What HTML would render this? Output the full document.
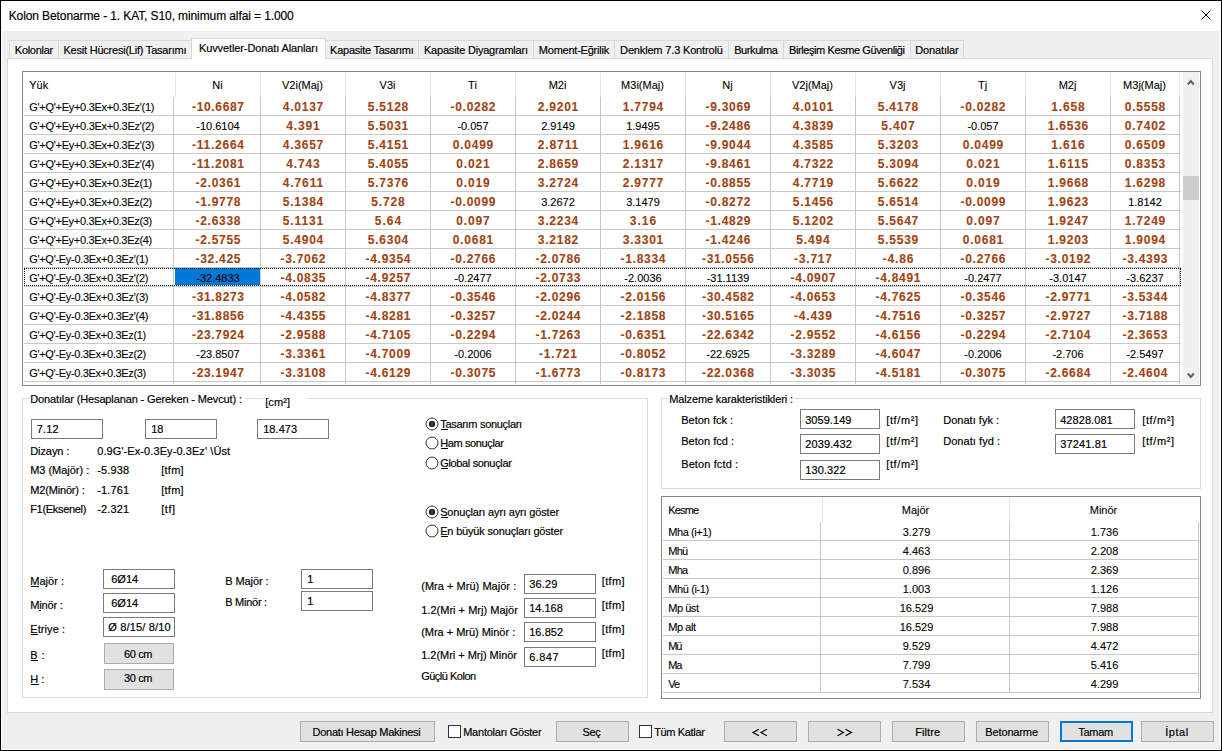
<!DOCTYPE html>
<html><head><meta charset="utf-8"><style>
html,body{margin:0;padding:0;width:1222px;height:751px;overflow:hidden;background:#000}
.t,.a{position:absolute;white-space:nowrap;line-height:14px;font-family:"Liberation Sans",sans-serif;color:#000}
.t{-webkit-text-stroke:0.18px currentColor}
.a{-webkit-text-stroke:0.1px currentColor}
</style></head><body>
<div style="position:absolute;left:0px;top:0px;width:1222px;height:751px;background:#000"></div>
<div style="position:absolute;left:1px;top:1px;width:1220px;height:749px;background:#fff"></div>
<div style="position:absolute;left:2px;top:31px;width:1218px;height:718px;background:#f0f0f0"></div>
<div class="t" style="left:8.70px;top:9px;font-size:12px;letter-spacing:-0.101px;">Kolon Betonarme - 1. KAT, S10, minimum alfai = 1.000</div>
<svg style="position:absolute;left:1200px;top:9px" width="13" height="13"><path d="M1.5 1.5L10.5 10.5M10.5 1.5L1.5 10.5" stroke="#000" stroke-width="1"/></svg>
<div style="position:absolute;left:7px;top:58px;width:1206px;height:655px;background:#fff;box-sizing:border-box;border:1px solid #d9d9d9"></div>
<div style="position:absolute;left:9px;top:40px;width:50px;height:19px;background:#f0f0f0;box-sizing:border-box;border:1px solid #d9d9d9"></div>
<div style="position:absolute;left:58px;top:40px;width:134px;height:19px;background:#f0f0f0;box-sizing:border-box;border:1px solid #d9d9d9"></div>
<div style="position:absolute;left:325px;top:40px;width:94px;height:19px;background:#f0f0f0;box-sizing:border-box;border:1px solid #d9d9d9"></div>
<div style="position:absolute;left:418px;top:40px;width:116px;height:19px;background:#f0f0f0;box-sizing:border-box;border:1px solid #d9d9d9"></div>
<div style="position:absolute;left:533px;top:40px;width:82px;height:19px;background:#f0f0f0;box-sizing:border-box;border:1px solid #d9d9d9"></div>
<div style="position:absolute;left:614px;top:40px;width:115px;height:19px;background:#f0f0f0;box-sizing:border-box;border:1px solid #d9d9d9"></div>
<div style="position:absolute;left:728px;top:40px;width:56px;height:19px;background:#f0f0f0;box-sizing:border-box;border:1px solid #d9d9d9"></div>
<div style="position:absolute;left:783px;top:40px;width:128px;height:19px;background:#f0f0f0;box-sizing:border-box;border:1px solid #d9d9d9"></div>
<div style="position:absolute;left:910px;top:40px;width:54px;height:19px;background:#f0f0f0;box-sizing:border-box;border:1px solid #d9d9d9"></div>
<div class="t" style="left:14.85px;top:43px;font-size:11px;letter-spacing:-0.296px;">Kolonlar</div>
<div class="t" style="left:63.50px;top:43px;font-size:11px;letter-spacing:-0.223px;">Kesit Hücresi(Lif) Tasarımı</div>
<div style="position:absolute;left:191px;top:38px;width:135px;height:21px;background:#fff;box-sizing:border-box;border:1px solid #d9d9d9;border-bottom:none"></div>
<div class="t" style="left:199.00px;top:41px;font-size:11px;letter-spacing:-0.114px;">Kuvvetler-Donatı Alanları</div>
<div class="t" style="left:330.10px;top:43px;font-size:11px;letter-spacing:-0.256px;">Kapasite Tasarımı</div>
<div class="t" style="left:424.00px;top:43px;font-size:11px;letter-spacing:-0.212px;">Kapasite Diyagramları</div>
<div class="t" style="left:538.85px;top:43px;font-size:11px;letter-spacing:-0.234px;">Moment-Eğrilik</div>
<div class="t" style="left:620.10px;top:43px;font-size:11px;letter-spacing:-0.160px;">Denklem 7.3 Kontrolü</div>
<div class="t" style="left:734.20px;top:43px;font-size:11px;letter-spacing:-0.410px;">Burkulma</div>
<div class="t" style="left:789.00px;top:43px;font-size:11px;letter-spacing:-0.406px;">Birleşim Kesme Güvenliği</div>
<div class="t" style="left:915.20px;top:43px;font-size:11px;letter-spacing:-0.132px;">Donatılar</div>
<div style="position:absolute;left:22px;top:71px;width:1179px;height:315px;background:#fff;box-sizing:border-box;border:1px solid #828790"></div>
<div style="position:absolute;left:175px;top:73px;width:1px;height:24px;background:#e5e5e5"></div>
<div style="position:absolute;left:260px;top:73px;width:1px;height:24px;background:#e5e5e5"></div>
<div style="position:absolute;left:345px;top:73px;width:1px;height:24px;background:#e5e5e5"></div>
<div style="position:absolute;left:430px;top:73px;width:1px;height:24px;background:#e5e5e5"></div>
<div style="position:absolute;left:515px;top:73px;width:1px;height:24px;background:#e5e5e5"></div>
<div style="position:absolute;left:600px;top:73px;width:1px;height:24px;background:#e5e5e5"></div>
<div style="position:absolute;left:685px;top:73px;width:1px;height:24px;background:#e5e5e5"></div>
<div style="position:absolute;left:770px;top:73px;width:1px;height:24px;background:#e5e5e5"></div>
<div style="position:absolute;left:855px;top:73px;width:1px;height:24px;background:#e5e5e5"></div>
<div style="position:absolute;left:940px;top:73px;width:1px;height:24px;background:#e5e5e5"></div>
<div style="position:absolute;left:1025px;top:73px;width:1px;height:24px;background:#e5e5e5"></div>
<div style="position:absolute;left:1110px;top:73px;width:1px;height:24px;background:#e5e5e5"></div>
<div style="position:absolute;left:1179px;top:73px;width:1px;height:24px;background:#e5e5e5"></div>
<div style="position:absolute;left:173px;top:97px;width:1px;height:287px;background:#c8c8c8"></div>
<div style="position:absolute;left:260px;top:97px;width:1px;height:287px;background:#c8c8c8"></div>
<div style="position:absolute;left:345px;top:97px;width:1px;height:287px;background:#c8c8c8"></div>
<div style="position:absolute;left:430px;top:97px;width:1px;height:287px;background:#c8c8c8"></div>
<div style="position:absolute;left:515px;top:97px;width:1px;height:287px;background:#c8c8c8"></div>
<div style="position:absolute;left:600px;top:97px;width:1px;height:287px;background:#c8c8c8"></div>
<div style="position:absolute;left:685px;top:97px;width:1px;height:287px;background:#c8c8c8"></div>
<div style="position:absolute;left:770px;top:97px;width:1px;height:287px;background:#c8c8c8"></div>
<div style="position:absolute;left:855px;top:97px;width:1px;height:287px;background:#c8c8c8"></div>
<div style="position:absolute;left:940px;top:97px;width:1px;height:287px;background:#c8c8c8"></div>
<div style="position:absolute;left:1025px;top:97px;width:1px;height:287px;background:#c8c8c8"></div>
<div style="position:absolute;left:1110px;top:97px;width:1px;height:287px;background:#c8c8c8"></div>
<div style="position:absolute;left:1179px;top:97px;width:1px;height:287px;background:#c8c8c8"></div>
<div style="position:absolute;left:24px;top:115px;width:1157px;height:1px;background:#c8c8c8"></div>
<div style="position:absolute;left:24px;top:134px;width:1157px;height:1px;background:#c8c8c8"></div>
<div style="position:absolute;left:24px;top:153px;width:1157px;height:1px;background:#c8c8c8"></div>
<div style="position:absolute;left:24px;top:172px;width:1157px;height:1px;background:#c8c8c8"></div>
<div style="position:absolute;left:24px;top:191px;width:1157px;height:1px;background:#c8c8c8"></div>
<div style="position:absolute;left:24px;top:210px;width:1157px;height:1px;background:#c8c8c8"></div>
<div style="position:absolute;left:24px;top:229px;width:1157px;height:1px;background:#c8c8c8"></div>
<div style="position:absolute;left:24px;top:248px;width:1157px;height:1px;background:#c8c8c8"></div>
<div style="position:absolute;left:24px;top:267px;width:1157px;height:1px;background:#c8c8c8"></div>
<div style="position:absolute;left:24px;top:286px;width:1157px;height:1px;background:#c8c8c8"></div>
<div style="position:absolute;left:24px;top:305px;width:1157px;height:1px;background:#c8c8c8"></div>
<div style="position:absolute;left:24px;top:324px;width:1157px;height:1px;background:#c8c8c8"></div>
<div style="position:absolute;left:24px;top:343px;width:1157px;height:1px;background:#c8c8c8"></div>
<div style="position:absolute;left:24px;top:362px;width:1157px;height:1px;background:#c8c8c8"></div>
<div style="position:absolute;left:24px;top:381px;width:1157px;height:1px;background:#c8c8c8"></div>
<div class="a" style="left:29.20px;top:78px;font-size:11px;">Yük</div>
<div class="a" style="left:212.31px;top:78px;font-size:11px;">Ni</div>
<div class="a" style="left:282.03px;top:78px;font-size:11px;">V2i(Maj)</div>
<div class="a" style="left:379.55px;top:78px;font-size:11px;">V3i</div>
<div class="a" style="left:468.12px;top:78px;font-size:11px;">Ti</div>
<div class="a" style="left:548.64px;top:78px;font-size:11px;">M2i</div>
<div class="a" style="left:621.12px;top:78px;font-size:11px;">M3i(Maj)</div>
<div class="a" style="left:722.31px;top:78px;font-size:11px;">Nj</div>
<div class="a" style="left:792.03px;top:78px;font-size:11px;">V2j(Maj)</div>
<div class="a" style="left:889.55px;top:78px;font-size:11px;">V3j</div>
<div class="a" style="left:977.92px;top:78px;font-size:11px;">Tj</div>
<div class="a" style="left:1058.64px;top:78px;font-size:11px;">M2j</div>
<div class="a" style="left:1123.12px;top:78px;font-size:11px;">M3j(Maj)</div>
<div style="position:absolute;left:175px;top:268px;width:85px;height:17px;background:#0078d7"></div>
<div class="a" style="left:29.20px;top:100px;font-size:11px;letter-spacing:-0.278px;">G'+Q'+Ey+0.3Ex+0.3Ez'(1)</div>
<div class="a" style="left:192.00px;top:100px;font-size:12px;font-weight:bold;color:#a04412;letter-spacing:0.663px;">-10.6687</div>
<div class="a" style="left:282.75px;top:100px;font-size:12px;font-weight:bold;color:#a04412;letter-spacing:0.762px;">4.0137</div>
<div class="a" style="left:367.75px;top:100px;font-size:12px;font-weight:bold;color:#a04412;letter-spacing:0.762px;">5.5128</div>
<div class="a" style="left:450.50px;top:100px;font-size:12px;font-weight:bold;color:#a04412;letter-spacing:0.719px;">-0.0282</div>
<div class="a" style="left:537.75px;top:100px;font-size:12px;font-weight:bold;color:#a04412;letter-spacing:0.762px;">2.9201</div>
<div class="a" style="left:622.75px;top:100px;font-size:12px;font-weight:bold;color:#a04412;letter-spacing:0.762px;">1.7794</div>
<div class="a" style="left:705.50px;top:100px;font-size:12px;font-weight:bold;color:#a04412;letter-spacing:0.719px;">-9.3069</div>
<div class="a" style="left:792.75px;top:100px;font-size:12px;font-weight:bold;color:#a04412;letter-spacing:0.762px;">4.0101</div>
<div class="a" style="left:877.75px;top:100px;font-size:12px;font-weight:bold;color:#a04412;letter-spacing:0.762px;">5.4178</div>
<div class="a" style="left:960.50px;top:100px;font-size:12px;font-weight:bold;color:#a04412;letter-spacing:0.719px;">-0.0282</div>
<div class="a" style="left:1051.25px;top:100px;font-size:12px;font-weight:bold;color:#a04412;letter-spacing:0.871px;">1.658</div>
<div class="a" style="left:1124.75px;top:100px;font-size:12px;font-weight:bold;color:#a04412;letter-spacing:0.762px;">0.5558</div>
<div class="a" style="left:29.20px;top:119px;font-size:11px;letter-spacing:-0.278px;">G'+Q'+Ey+0.3Ex+0.3Ez'(2)</div>
<div class="a" style="left:196.27px;top:119px;font-size:11px;">-10.6104</div>
<div class="a" style="left:286.25px;top:119px;font-size:12px;font-weight:bold;color:#a04412;letter-spacing:0.871px;">4.391</div>
<div class="a" style="left:367.75px;top:119px;font-size:12px;font-weight:bold;color:#a04412;letter-spacing:0.762px;">5.5031</div>
<div class="a" style="left:457.39px;top:119px;font-size:11px;">-0.057</div>
<div class="a" style="left:541.16px;top:119px;font-size:11px;">2.9149</div>
<div class="a" style="left:626.16px;top:119px;font-size:11px;">1.9495</div>
<div class="a" style="left:705.50px;top:119px;font-size:12px;font-weight:bold;color:#a04412;letter-spacing:0.719px;">-9.2486</div>
<div class="a" style="left:792.75px;top:119px;font-size:12px;font-weight:bold;color:#a04412;letter-spacing:0.762px;">4.3839</div>
<div class="a" style="left:881.25px;top:119px;font-size:12px;font-weight:bold;color:#a04412;letter-spacing:0.871px;">5.407</div>
<div class="a" style="left:967.39px;top:119px;font-size:11px;">-0.057</div>
<div class="a" style="left:1047.75px;top:119px;font-size:12px;font-weight:bold;color:#a04412;letter-spacing:0.762px;">1.6536</div>
<div class="a" style="left:1124.75px;top:119px;font-size:12px;font-weight:bold;color:#a04412;letter-spacing:0.762px;">0.7402</div>
<div class="a" style="left:29.20px;top:138px;font-size:11px;letter-spacing:-0.278px;">G'+Q'+Ey+0.3Ex+0.3Ez'(3)</div>
<div class="a" style="left:192.00px;top:138px;font-size:12px;font-weight:bold;color:#a04412;letter-spacing:0.757px;">-11.2664</div>
<div class="a" style="left:282.75px;top:138px;font-size:12px;font-weight:bold;color:#a04412;letter-spacing:0.762px;">4.3657</div>
<div class="a" style="left:367.75px;top:138px;font-size:12px;font-weight:bold;color:#a04412;letter-spacing:0.762px;">5.4151</div>
<div class="a" style="left:452.75px;top:138px;font-size:12px;font-weight:bold;color:#a04412;letter-spacing:0.762px;">0.0499</div>
<div class="a" style="left:537.75px;top:138px;font-size:12px;font-weight:bold;color:#a04412;letter-spacing:0.894px;">2.8711</div>
<div class="a" style="left:622.75px;top:138px;font-size:12px;font-weight:bold;color:#a04412;letter-spacing:0.762px;">1.9616</div>
<div class="a" style="left:705.50px;top:138px;font-size:12px;font-weight:bold;color:#a04412;letter-spacing:0.719px;">-9.9044</div>
<div class="a" style="left:792.75px;top:138px;font-size:12px;font-weight:bold;color:#a04412;letter-spacing:0.762px;">4.3585</div>
<div class="a" style="left:877.75px;top:138px;font-size:12px;font-weight:bold;color:#a04412;letter-spacing:0.762px;">5.3203</div>
<div class="a" style="left:962.75px;top:138px;font-size:12px;font-weight:bold;color:#a04412;letter-spacing:0.762px;">0.0499</div>
<div class="a" style="left:1051.25px;top:138px;font-size:12px;font-weight:bold;color:#a04412;letter-spacing:0.871px;">1.616</div>
<div class="a" style="left:1124.75px;top:138px;font-size:12px;font-weight:bold;color:#a04412;letter-spacing:0.762px;">0.6509</div>
<div class="a" style="left:29.20px;top:157px;font-size:11px;letter-spacing:-0.278px;">G'+Q'+Ey+0.3Ex+0.3Ez'(4)</div>
<div class="a" style="left:192.00px;top:157px;font-size:12px;font-weight:bold;color:#a04412;letter-spacing:0.757px;">-11.2081</div>
<div class="a" style="left:286.25px;top:157px;font-size:12px;font-weight:bold;color:#a04412;letter-spacing:0.871px;">4.743</div>
<div class="a" style="left:367.75px;top:157px;font-size:12px;font-weight:bold;color:#a04412;letter-spacing:0.762px;">5.4055</div>
<div class="a" style="left:456.25px;top:157px;font-size:12px;font-weight:bold;color:#a04412;letter-spacing:0.871px;">0.021</div>
<div class="a" style="left:537.75px;top:157px;font-size:12px;font-weight:bold;color:#a04412;letter-spacing:0.762px;">2.8659</div>
<div class="a" style="left:622.75px;top:157px;font-size:12px;font-weight:bold;color:#a04412;letter-spacing:0.762px;">2.1317</div>
<div class="a" style="left:705.50px;top:157px;font-size:12px;font-weight:bold;color:#a04412;letter-spacing:0.719px;">-9.8461</div>
<div class="a" style="left:792.75px;top:157px;font-size:12px;font-weight:bold;color:#a04412;letter-spacing:0.762px;">4.7322</div>
<div class="a" style="left:877.75px;top:157px;font-size:12px;font-weight:bold;color:#a04412;letter-spacing:0.762px;">5.3094</div>
<div class="a" style="left:966.25px;top:157px;font-size:12px;font-weight:bold;color:#a04412;letter-spacing:0.871px;">0.021</div>
<div class="a" style="left:1047.75px;top:157px;font-size:12px;font-weight:bold;color:#a04412;letter-spacing:0.894px;">1.6115</div>
<div class="a" style="left:1124.75px;top:157px;font-size:12px;font-weight:bold;color:#a04412;letter-spacing:0.762px;">0.8353</div>
<div class="a" style="left:29.20px;top:176px;font-size:11px;letter-spacing:-0.295px;">G'+Q'+Ey+0.3Ex+0.3Ez(1)</div>
<div class="a" style="left:195.50px;top:176px;font-size:12px;font-weight:bold;color:#a04412;letter-spacing:0.719px;">-2.0361</div>
<div class="a" style="left:282.75px;top:176px;font-size:12px;font-weight:bold;color:#a04412;letter-spacing:0.894px;">4.7611</div>
<div class="a" style="left:367.75px;top:176px;font-size:12px;font-weight:bold;color:#a04412;letter-spacing:0.762px;">5.7376</div>
<div class="a" style="left:456.25px;top:176px;font-size:12px;font-weight:bold;color:#a04412;letter-spacing:0.871px;">0.019</div>
<div class="a" style="left:537.75px;top:176px;font-size:12px;font-weight:bold;color:#a04412;letter-spacing:0.762px;">3.2724</div>
<div class="a" style="left:622.75px;top:176px;font-size:12px;font-weight:bold;color:#a04412;letter-spacing:0.762px;">2.9777</div>
<div class="a" style="left:705.50px;top:176px;font-size:12px;font-weight:bold;color:#a04412;letter-spacing:0.719px;">-0.8855</div>
<div class="a" style="left:792.75px;top:176px;font-size:12px;font-weight:bold;color:#a04412;letter-spacing:0.762px;">4.7719</div>
<div class="a" style="left:877.75px;top:176px;font-size:12px;font-weight:bold;color:#a04412;letter-spacing:0.762px;">5.6622</div>
<div class="a" style="left:966.25px;top:176px;font-size:12px;font-weight:bold;color:#a04412;letter-spacing:0.871px;">0.019</div>
<div class="a" style="left:1047.75px;top:176px;font-size:12px;font-weight:bold;color:#a04412;letter-spacing:0.762px;">1.9668</div>
<div class="a" style="left:1124.75px;top:176px;font-size:12px;font-weight:bold;color:#a04412;letter-spacing:0.762px;">1.6298</div>
<div class="a" style="left:29.20px;top:195px;font-size:11px;letter-spacing:-0.295px;">G'+Q'+Ey+0.3Ex+0.3Ez(2)</div>
<div class="a" style="left:195.50px;top:195px;font-size:12px;font-weight:bold;color:#a04412;letter-spacing:0.719px;">-1.9778</div>
<div class="a" style="left:282.75px;top:195px;font-size:12px;font-weight:bold;color:#a04412;letter-spacing:0.762px;">5.1384</div>
<div class="a" style="left:371.25px;top:195px;font-size:12px;font-weight:bold;color:#a04412;letter-spacing:0.871px;">5.728</div>
<div class="a" style="left:450.50px;top:195px;font-size:12px;font-weight:bold;color:#a04412;letter-spacing:0.719px;">-0.0099</div>
<div class="a" style="left:541.16px;top:195px;font-size:11px;">3.2672</div>
<div class="a" style="left:626.16px;top:195px;font-size:11px;">3.1479</div>
<div class="a" style="left:705.50px;top:195px;font-size:12px;font-weight:bold;color:#a04412;letter-spacing:0.719px;">-0.8272</div>
<div class="a" style="left:792.75px;top:195px;font-size:12px;font-weight:bold;color:#a04412;letter-spacing:0.762px;">5.1456</div>
<div class="a" style="left:877.75px;top:195px;font-size:12px;font-weight:bold;color:#a04412;letter-spacing:0.762px;">5.6514</div>
<div class="a" style="left:960.50px;top:195px;font-size:12px;font-weight:bold;color:#a04412;letter-spacing:0.719px;">-0.0099</div>
<div class="a" style="left:1047.75px;top:195px;font-size:12px;font-weight:bold;color:#a04412;letter-spacing:0.762px;">1.9623</div>
<div class="a" style="left:1128.16px;top:195px;font-size:11px;">1.8142</div>
<div class="a" style="left:29.20px;top:214px;font-size:11px;letter-spacing:-0.295px;">G'+Q'+Ey+0.3Ex+0.3Ez(3)</div>
<div class="a" style="left:195.50px;top:214px;font-size:12px;font-weight:bold;color:#a04412;letter-spacing:0.719px;">-2.6338</div>
<div class="a" style="left:282.75px;top:214px;font-size:12px;font-weight:bold;color:#a04412;letter-spacing:0.894px;">5.1131</div>
<div class="a" style="left:374.75px;top:214px;font-size:12px;font-weight:bold;color:#a04412;letter-spacing:1.052px;">5.64</div>
<div class="a" style="left:456.25px;top:214px;font-size:12px;font-weight:bold;color:#a04412;letter-spacing:0.871px;">0.097</div>
<div class="a" style="left:537.75px;top:214px;font-size:12px;font-weight:bold;color:#a04412;letter-spacing:0.762px;">3.2234</div>
<div class="a" style="left:629.75px;top:214px;font-size:12px;font-weight:bold;color:#a04412;letter-spacing:1.052px;">3.16</div>
<div class="a" style="left:705.50px;top:214px;font-size:12px;font-weight:bold;color:#a04412;letter-spacing:0.719px;">-1.4829</div>
<div class="a" style="left:792.75px;top:214px;font-size:12px;font-weight:bold;color:#a04412;letter-spacing:0.762px;">5.1202</div>
<div class="a" style="left:877.75px;top:214px;font-size:12px;font-weight:bold;color:#a04412;letter-spacing:0.762px;">5.5647</div>
<div class="a" style="left:966.25px;top:214px;font-size:12px;font-weight:bold;color:#a04412;letter-spacing:0.871px;">0.097</div>
<div class="a" style="left:1047.75px;top:214px;font-size:12px;font-weight:bold;color:#a04412;letter-spacing:0.762px;">1.9247</div>
<div class="a" style="left:1124.75px;top:214px;font-size:12px;font-weight:bold;color:#a04412;letter-spacing:0.762px;">1.7249</div>
<div class="a" style="left:29.20px;top:233px;font-size:11px;letter-spacing:-0.295px;">G'+Q'+Ey+0.3Ex+0.3Ez(4)</div>
<div class="a" style="left:195.50px;top:233px;font-size:12px;font-weight:bold;color:#a04412;letter-spacing:0.719px;">-2.5755</div>
<div class="a" style="left:282.75px;top:233px;font-size:12px;font-weight:bold;color:#a04412;letter-spacing:0.762px;">5.4904</div>
<div class="a" style="left:367.75px;top:233px;font-size:12px;font-weight:bold;color:#a04412;letter-spacing:0.762px;">5.6304</div>
<div class="a" style="left:452.75px;top:233px;font-size:12px;font-weight:bold;color:#a04412;letter-spacing:0.762px;">0.0681</div>
<div class="a" style="left:537.75px;top:233px;font-size:12px;font-weight:bold;color:#a04412;letter-spacing:0.762px;">3.2182</div>
<div class="a" style="left:622.75px;top:233px;font-size:12px;font-weight:bold;color:#a04412;letter-spacing:0.762px;">3.3301</div>
<div class="a" style="left:705.50px;top:233px;font-size:12px;font-weight:bold;color:#a04412;letter-spacing:0.719px;">-1.4246</div>
<div class="a" style="left:796.25px;top:233px;font-size:12px;font-weight:bold;color:#a04412;letter-spacing:0.871px;">5.494</div>
<div class="a" style="left:877.75px;top:233px;font-size:12px;font-weight:bold;color:#a04412;letter-spacing:0.762px;">5.5539</div>
<div class="a" style="left:962.75px;top:233px;font-size:12px;font-weight:bold;color:#a04412;letter-spacing:0.762px;">0.0681</div>
<div class="a" style="left:1047.75px;top:233px;font-size:12px;font-weight:bold;color:#a04412;letter-spacing:0.762px;">1.9203</div>
<div class="a" style="left:1124.75px;top:233px;font-size:12px;font-weight:bold;color:#a04412;letter-spacing:0.762px;">1.9094</div>
<div class="a" style="left:29.20px;top:252px;font-size:11px;letter-spacing:-0.298px;">G'+Q'-Ey-0.3Ex+0.3Ez'(1)</div>
<div class="a" style="left:195.50px;top:252px;font-size:12px;font-weight:bold;color:#a04412;letter-spacing:0.719px;">-32.425</div>
<div class="a" style="left:280.50px;top:252px;font-size:12px;font-weight:bold;color:#a04412;letter-spacing:0.719px;">-3.7062</div>
<div class="a" style="left:365.50px;top:252px;font-size:12px;font-weight:bold;color:#a04412;letter-spacing:0.719px;">-4.9354</div>
<div class="a" style="left:450.50px;top:252px;font-size:12px;font-weight:bold;color:#a04412;letter-spacing:0.719px;">-0.2766</div>
<div class="a" style="left:535.50px;top:252px;font-size:12px;font-weight:bold;color:#a04412;letter-spacing:0.719px;">-2.0786</div>
<div class="a" style="left:620.50px;top:252px;font-size:12px;font-weight:bold;color:#a04412;letter-spacing:0.719px;">-1.8334</div>
<div class="a" style="left:702.00px;top:252px;font-size:12px;font-weight:bold;color:#a04412;letter-spacing:0.663px;">-31.0556</div>
<div class="a" style="left:794.00px;top:252px;font-size:12px;font-weight:bold;color:#a04412;letter-spacing:0.797px;">-3.717</div>
<div class="a" style="left:882.50px;top:252px;font-size:12px;font-weight:bold;color:#a04412;letter-spacing:0.914px;">-4.86</div>
<div class="a" style="left:960.50px;top:252px;font-size:12px;font-weight:bold;color:#a04412;letter-spacing:0.719px;">-0.2766</div>
<div class="a" style="left:1045.50px;top:252px;font-size:12px;font-weight:bold;color:#a04412;letter-spacing:0.719px;">-3.0192</div>
<div class="a" style="left:1122.50px;top:252px;font-size:12px;font-weight:bold;color:#a04412;letter-spacing:0.719px;">-3.4393</div>
<div class="a" style="left:29.20px;top:271px;font-size:11px;letter-spacing:-0.298px;">G'+Q'-Ey-0.3Ex+0.3Ez'(2)</div>
<div class="a" style="left:196.27px;top:271px;font-size:11px;">-32.4833</div>
<div class="a" style="left:280.50px;top:271px;font-size:12px;font-weight:bold;color:#a04412;letter-spacing:0.719px;">-4.0835</div>
<div class="a" style="left:365.50px;top:271px;font-size:12px;font-weight:bold;color:#a04412;letter-spacing:0.719px;">-4.9257</div>
<div class="a" style="left:454.33px;top:271px;font-size:11px;">-0.2477</div>
<div class="a" style="left:535.50px;top:271px;font-size:12px;font-weight:bold;color:#a04412;letter-spacing:0.719px;">-2.0733</div>
<div class="a" style="left:624.33px;top:271px;font-size:11px;">-2.0036</div>
<div class="a" style="left:706.67px;top:271px;font-size:11px;">-31.1139</div>
<div class="a" style="left:790.50px;top:271px;font-size:12px;font-weight:bold;color:#a04412;letter-spacing:0.719px;">-4.0907</div>
<div class="a" style="left:875.50px;top:271px;font-size:12px;font-weight:bold;color:#a04412;letter-spacing:0.719px;">-4.8491</div>
<div class="a" style="left:964.33px;top:271px;font-size:11px;">-0.2477</div>
<div class="a" style="left:1049.33px;top:271px;font-size:11px;">-3.0147</div>
<div class="a" style="left:1126.33px;top:271px;font-size:11px;">-3.6237</div>
<div class="a" style="left:29.20px;top:290px;font-size:11px;letter-spacing:-0.298px;">G'+Q'-Ey-0.3Ex+0.3Ez'(3)</div>
<div class="a" style="left:192.00px;top:290px;font-size:12px;font-weight:bold;color:#a04412;letter-spacing:0.663px;">-31.8273</div>
<div class="a" style="left:280.50px;top:290px;font-size:12px;font-weight:bold;color:#a04412;letter-spacing:0.719px;">-4.0582</div>
<div class="a" style="left:365.50px;top:290px;font-size:12px;font-weight:bold;color:#a04412;letter-spacing:0.719px;">-4.8377</div>
<div class="a" style="left:450.50px;top:290px;font-size:12px;font-weight:bold;color:#a04412;letter-spacing:0.719px;">-0.3546</div>
<div class="a" style="left:535.50px;top:290px;font-size:12px;font-weight:bold;color:#a04412;letter-spacing:0.719px;">-2.0296</div>
<div class="a" style="left:620.50px;top:290px;font-size:12px;font-weight:bold;color:#a04412;letter-spacing:0.719px;">-2.0156</div>
<div class="a" style="left:702.00px;top:290px;font-size:12px;font-weight:bold;color:#a04412;letter-spacing:0.663px;">-30.4582</div>
<div class="a" style="left:790.50px;top:290px;font-size:12px;font-weight:bold;color:#a04412;letter-spacing:0.719px;">-4.0653</div>
<div class="a" style="left:875.50px;top:290px;font-size:12px;font-weight:bold;color:#a04412;letter-spacing:0.719px;">-4.7625</div>
<div class="a" style="left:960.50px;top:290px;font-size:12px;font-weight:bold;color:#a04412;letter-spacing:0.719px;">-0.3546</div>
<div class="a" style="left:1045.50px;top:290px;font-size:12px;font-weight:bold;color:#a04412;letter-spacing:0.719px;">-2.9771</div>
<div class="a" style="left:1122.50px;top:290px;font-size:12px;font-weight:bold;color:#a04412;letter-spacing:0.719px;">-3.5344</div>
<div class="a" style="left:29.20px;top:309px;font-size:11px;letter-spacing:-0.298px;">G'+Q'-Ey-0.3Ex+0.3Ez'(4)</div>
<div class="a" style="left:192.00px;top:309px;font-size:12px;font-weight:bold;color:#a04412;letter-spacing:0.663px;">-31.8856</div>
<div class="a" style="left:280.50px;top:309px;font-size:12px;font-weight:bold;color:#a04412;letter-spacing:0.719px;">-4.4355</div>
<div class="a" style="left:365.50px;top:309px;font-size:12px;font-weight:bold;color:#a04412;letter-spacing:0.719px;">-4.8281</div>
<div class="a" style="left:450.50px;top:309px;font-size:12px;font-weight:bold;color:#a04412;letter-spacing:0.719px;">-0.3257</div>
<div class="a" style="left:535.50px;top:309px;font-size:12px;font-weight:bold;color:#a04412;letter-spacing:0.719px;">-2.0244</div>
<div class="a" style="left:620.50px;top:309px;font-size:12px;font-weight:bold;color:#a04412;letter-spacing:0.719px;">-2.1858</div>
<div class="a" style="left:702.00px;top:309px;font-size:12px;font-weight:bold;color:#a04412;letter-spacing:0.663px;">-30.5165</div>
<div class="a" style="left:794.00px;top:309px;font-size:12px;font-weight:bold;color:#a04412;letter-spacing:0.797px;">-4.439</div>
<div class="a" style="left:875.50px;top:309px;font-size:12px;font-weight:bold;color:#a04412;letter-spacing:0.719px;">-4.7516</div>
<div class="a" style="left:960.50px;top:309px;font-size:12px;font-weight:bold;color:#a04412;letter-spacing:0.719px;">-0.3257</div>
<div class="a" style="left:1045.50px;top:309px;font-size:12px;font-weight:bold;color:#a04412;letter-spacing:0.719px;">-2.9727</div>
<div class="a" style="left:1122.50px;top:309px;font-size:12px;font-weight:bold;color:#a04412;letter-spacing:0.719px;">-3.7188</div>
<div class="a" style="left:29.20px;top:328px;font-size:11px;letter-spacing:-0.316px;">G'+Q'-Ey-0.3Ex+0.3Ez(1)</div>
<div class="a" style="left:192.00px;top:328px;font-size:12px;font-weight:bold;color:#a04412;letter-spacing:0.663px;">-23.7924</div>
<div class="a" style="left:280.50px;top:328px;font-size:12px;font-weight:bold;color:#a04412;letter-spacing:0.719px;">-2.9588</div>
<div class="a" style="left:365.50px;top:328px;font-size:12px;font-weight:bold;color:#a04412;letter-spacing:0.719px;">-4.7105</div>
<div class="a" style="left:450.50px;top:328px;font-size:12px;font-weight:bold;color:#a04412;letter-spacing:0.719px;">-0.2294</div>
<div class="a" style="left:535.50px;top:328px;font-size:12px;font-weight:bold;color:#a04412;letter-spacing:0.719px;">-1.7263</div>
<div class="a" style="left:620.50px;top:328px;font-size:12px;font-weight:bold;color:#a04412;letter-spacing:0.719px;">-0.6351</div>
<div class="a" style="left:702.00px;top:328px;font-size:12px;font-weight:bold;color:#a04412;letter-spacing:0.663px;">-22.6342</div>
<div class="a" style="left:790.50px;top:328px;font-size:12px;font-weight:bold;color:#a04412;letter-spacing:0.719px;">-2.9552</div>
<div class="a" style="left:875.50px;top:328px;font-size:12px;font-weight:bold;color:#a04412;letter-spacing:0.719px;">-4.6156</div>
<div class="a" style="left:960.50px;top:328px;font-size:12px;font-weight:bold;color:#a04412;letter-spacing:0.719px;">-0.2294</div>
<div class="a" style="left:1045.50px;top:328px;font-size:12px;font-weight:bold;color:#a04412;letter-spacing:0.719px;">-2.7104</div>
<div class="a" style="left:1122.50px;top:328px;font-size:12px;font-weight:bold;color:#a04412;letter-spacing:0.719px;">-2.3653</div>
<div class="a" style="left:29.20px;top:347px;font-size:11px;letter-spacing:-0.316px;">G'+Q'-Ey-0.3Ex+0.3Ez(2)</div>
<div class="a" style="left:196.27px;top:347px;font-size:11px;">-23.8507</div>
<div class="a" style="left:280.50px;top:347px;font-size:12px;font-weight:bold;color:#a04412;letter-spacing:0.719px;">-3.3361</div>
<div class="a" style="left:365.50px;top:347px;font-size:12px;font-weight:bold;color:#a04412;letter-spacing:0.719px;">-4.7009</div>
<div class="a" style="left:454.33px;top:347px;font-size:11px;">-0.2006</div>
<div class="a" style="left:539.00px;top:347px;font-size:12px;font-weight:bold;color:#a04412;letter-spacing:0.797px;">-1.721</div>
<div class="a" style="left:620.50px;top:347px;font-size:12px;font-weight:bold;color:#a04412;letter-spacing:0.719px;">-0.8052</div>
<div class="a" style="left:706.27px;top:347px;font-size:11px;">-22.6925</div>
<div class="a" style="left:790.50px;top:347px;font-size:12px;font-weight:bold;color:#a04412;letter-spacing:0.719px;">-3.3289</div>
<div class="a" style="left:875.50px;top:347px;font-size:12px;font-weight:bold;color:#a04412;letter-spacing:0.719px;">-4.6047</div>
<div class="a" style="left:964.33px;top:347px;font-size:11px;">-0.2006</div>
<div class="a" style="left:1052.39px;top:347px;font-size:11px;">-2.706</div>
<div class="a" style="left:1126.33px;top:347px;font-size:11px;">-2.5497</div>
<div class="a" style="left:29.20px;top:366px;font-size:11px;letter-spacing:-0.316px;">G'+Q'-Ey-0.3Ex+0.3Ez(3)</div>
<div class="a" style="left:192.00px;top:366px;font-size:12px;font-weight:bold;color:#a04412;letter-spacing:0.663px;">-23.1947</div>
<div class="a" style="left:280.50px;top:366px;font-size:12px;font-weight:bold;color:#a04412;letter-spacing:0.719px;">-3.3108</div>
<div class="a" style="left:365.50px;top:366px;font-size:12px;font-weight:bold;color:#a04412;letter-spacing:0.719px;">-4.6129</div>
<div class="a" style="left:450.50px;top:366px;font-size:12px;font-weight:bold;color:#a04412;letter-spacing:0.719px;">-0.3075</div>
<div class="a" style="left:535.50px;top:366px;font-size:12px;font-weight:bold;color:#a04412;letter-spacing:0.719px;">-1.6773</div>
<div class="a" style="left:620.50px;top:366px;font-size:12px;font-weight:bold;color:#a04412;letter-spacing:0.719px;">-0.8173</div>
<div class="a" style="left:702.00px;top:366px;font-size:12px;font-weight:bold;color:#a04412;letter-spacing:0.663px;">-22.0368</div>
<div class="a" style="left:790.50px;top:366px;font-size:12px;font-weight:bold;color:#a04412;letter-spacing:0.719px;">-3.3035</div>
<div class="a" style="left:875.50px;top:366px;font-size:12px;font-weight:bold;color:#a04412;letter-spacing:0.719px;">-4.5181</div>
<div class="a" style="left:960.50px;top:366px;font-size:12px;font-weight:bold;color:#a04412;letter-spacing:0.719px;">-0.3075</div>
<div class="a" style="left:1045.50px;top:366px;font-size:12px;font-weight:bold;color:#a04412;letter-spacing:0.719px;">-2.6684</div>
<div class="a" style="left:1122.50px;top:366px;font-size:12px;font-weight:bold;color:#a04412;letter-spacing:0.719px;">-2.4604</div>
<div style="position:absolute;left:24px;top:268px;width:1157px;height:18px;box-sizing:border-box;border:1px dotted #000"></div>
<div style="position:absolute;left:1183px;top:72px;width:16px;height:312px;background:#f0f0f0"></div>
<div style="position:absolute;left:1183px;top:176px;width:16px;height:24px;background:#cdcdcd"></div>
<svg style="position:absolute;left:1186px;top:78px" width="10" height="8"><path d="M1.8 6.5L4.8 3L7.8 6.5" stroke="#606060" stroke-width="2" fill="none"/></svg>
<svg style="position:absolute;left:1186px;top:372px" width="10" height="8"><path d="M1.8 1.5L4.8 5L7.8 1.5" stroke="#606060" stroke-width="2" fill="none"/></svg>
<div style="position:absolute;left:22px;top:398px;width:626px;height:300px;box-sizing:border-box;border:1px solid #dcdcdc"></div>
<div style="position:absolute;left:29px;top:395px;width:216px;height:8px;background:#fff"></div>
<div class="t" style="left:30.20px;top:392px;font-size:11px;letter-spacing:-0.123px;">Donatılar (Hesaplanan - Gereken - Mevcut) :</div>
<div style="position:absolute;left:263px;top:395px;width:43px;height:8px;background:#fff"></div>
<div class="t" style="left:265.20px;top:395px;font-size:11px;letter-spacing:0.091px;">[cm²]</div>
<div style="position:absolute;left:31px;top:419px;width:72px;height:20px;background:#fff;box-sizing:border-box;border:1px solid #7a7a7a"></div>
<div class="t" style="left:36.70px;top:422px;font-size:11px;letter-spacing:0.188px;">7.12</div>
<div style="position:absolute;left:145px;top:419px;width:72px;height:20px;background:#fff;box-sizing:border-box;border:1px solid #7a7a7a"></div>
<div class="t" style="left:151.20px;top:422px;font-size:11px;">18</div>
<div style="position:absolute;left:257px;top:419px;width:72px;height:20px;background:#fff;box-sizing:border-box;border:1px solid #7a7a7a"></div>
<div class="t" style="left:263.20px;top:422px;font-size:11px;letter-spacing:0.062px;">18.473</div>
<div class="t" style="left:30.20px;top:444px;font-size:11px;letter-spacing:-0.079px;">Dizayn :</div>
<div class="t" style="left:97.20px;top:444px;font-size:11px;letter-spacing:0.087px;">0.9G'-Ex-0.3Ey-0.3Ez' \Üst</div>
<div class="t" style="left:30.20px;top:463px;font-size:11px;letter-spacing:-0.026px;">M3 (Majör) :</div>
<div class="t" style="left:97.20px;top:463px;font-size:11px;letter-spacing:0.156px;">-5.938</div>
<div class="t" style="left:161.20px;top:463px;font-size:11px;letter-spacing:0.273px;">[tfm]</div>
<div class="t" style="left:30.20px;top:483px;font-size:11px;letter-spacing:-0.162px;">M2(Minör) :</div>
<div class="t" style="left:97.20px;top:483px;font-size:11px;letter-spacing:0.156px;">-1.761</div>
<div class="t" style="left:161.20px;top:483px;font-size:11px;letter-spacing:0.273px;">[tfm]</div>
<div class="t" style="left:30.20px;top:502px;font-size:11px;letter-spacing:-0.311px;">F1(Eksenel)</div>
<div class="t" style="left:97.20px;top:502px;font-size:11px;letter-spacing:0.156px;">-2.321</div>
<div class="t" style="left:161.20px;top:502px;font-size:11px;letter-spacing:0.583px;">[tf]</div>
<svg style="position:absolute;left:424.5px;top:416.5px" width="14" height="14"><circle cx="7" cy="7" r="6" fill="#fff" stroke="#333" stroke-width="1"/><circle cx="7" cy="7" r="3.2" fill="#333"/></svg>
<div class="t" style="left:440.20px;top:417px;font-size:11px;letter-spacing:-0.303px;">Tasarım sonuçları</div>
<div style="position:absolute;left:441px;top:429px;width:7px;height:1px;background:#000"></div>
<svg style="position:absolute;left:424.5px;top:435.5px" width="14" height="14"><circle cx="7" cy="7" r="6" fill="#fff" stroke="#333" stroke-width="1"/></svg>
<div class="t" style="left:440.20px;top:436px;font-size:11px;letter-spacing:-0.370px;">Ham sonuçlar</div>
<div style="position:absolute;left:441px;top:448px;width:7px;height:1px;background:#000"></div>
<svg style="position:absolute;left:424.5px;top:455.5px" width="14" height="14"><circle cx="7" cy="7" r="6" fill="#fff" stroke="#333" stroke-width="1"/></svg>
<div class="t" style="left:440.20px;top:456px;font-size:11px;letter-spacing:-0.341px;">Global sonuçlar</div>
<div style="position:absolute;left:441px;top:468px;width:7px;height:1px;background:#000"></div>
<svg style="position:absolute;left:424.5px;top:504.5px" width="14" height="14"><circle cx="7" cy="7" r="6" fill="#fff" stroke="#333" stroke-width="1"/><circle cx="7" cy="7" r="3.2" fill="#333"/></svg>
<div class="t" style="left:440.20px;top:505px;font-size:11px;letter-spacing:-0.159px;">Sonuçları ayrı ayrı göster</div>
<div style="position:absolute;left:441px;top:517px;width:7px;height:1px;background:#000"></div>
<svg style="position:absolute;left:424.5px;top:523.5px" width="14" height="14"><circle cx="7" cy="7" r="6" fill="#fff" stroke="#333" stroke-width="1"/></svg>
<div class="t" style="left:440.20px;top:524px;font-size:11px;letter-spacing:-0.178px;">En büyük sonuçları göster</div>
<div style="position:absolute;left:441px;top:536px;width:7px;height:1px;background:#000"></div>
<div class="t" style="left:30.20px;top:574px;font-size:11px;letter-spacing:0.062px;">Majör :</div>
<div style="position:absolute;left:31px;top:586px;width:8px;height:1px;background:#000"></div>
<div style="position:absolute;left:103px;top:569px;width:72px;height:20px;background:#fff;box-sizing:border-box;border:1px solid #7a7a7a"></div>
<div class="t" style="left:111.20px;top:572px;font-size:11px;letter-spacing:0.021px;">6Ø14</div>
<div class="t" style="left:30.20px;top:598px;font-size:11px;letter-spacing:-0.154px;">Minör :</div>
<div style="position:absolute;left:39px;top:610px;width:2px;height:1px;background:#000"></div>
<div style="position:absolute;left:103px;top:593px;width:72px;height:20px;background:#fff;box-sizing:border-box;border:1px solid #7a7a7a"></div>
<div class="t" style="left:111.20px;top:596px;font-size:11px;letter-spacing:0.021px;">6Ø14</div>
<div class="t" style="left:30.20px;top:622px;font-size:11px;letter-spacing:0.107px;">Etriye :</div>
<div style="position:absolute;left:31px;top:634px;width:7px;height:1px;background:#000"></div>
<div style="position:absolute;left:103px;top:617px;width:72px;height:20px;background:#fff;box-sizing:border-box;border:1px solid #7a7a7a"></div>
<div class="t" style="left:108.20px;top:620px;font-size:11px;letter-spacing:0.170px;">Ø 8/15/ 8/10</div>
<div class="t" style="left:30.20px;top:648px;font-size:11px;letter-spacing:0.466px;">B :</div>
<div style="position:absolute;left:31px;top:660px;width:7px;height:1px;background:#000"></div>
<div style="position:absolute;left:104px;top:643px;width:70px;height:21px;background:#e1e1e1;box-sizing:border-box;border:1px solid #adadad"></div>
<div class="t" style="left:123.90px;top:647px;font-size:11px;letter-spacing:-0.342px;">60 cm</div>
<div class="t" style="left:30.20px;top:672px;font-size:11px;letter-spacing:-0.031px;">H :</div>
<div style="position:absolute;left:31px;top:684px;width:8px;height:1px;background:#000"></div>
<div style="position:absolute;left:104px;top:669px;width:70px;height:21px;background:#e1e1e1;box-sizing:border-box;border:1px solid #adadad"></div>
<div class="t" style="left:123.90px;top:671px;font-size:11px;letter-spacing:-0.342px;">30 cm</div>
<div class="t" style="left:225.20px;top:574px;font-size:11px;letter-spacing:-0.079px;">B Majör :</div>
<div style="position:absolute;left:301px;top:569px;width:72px;height:20px;background:#fff;box-sizing:border-box;border:1px solid #7a7a7a"></div>
<div class="t" style="left:307.20px;top:572px;font-size:11px;">1</div>
<div class="t" style="left:225.20px;top:595px;font-size:11px;letter-spacing:-0.254px;">B Minör :</div>
<div style="position:absolute;left:301px;top:591px;width:72px;height:20px;background:#fff;box-sizing:border-box;border:1px solid #7a7a7a"></div>
<div class="t" style="left:307.20px;top:594px;font-size:11px;">1</div>
<div class="t" style="left:421.20px;top:579px;font-size:11px;letter-spacing:0.032px;">(Mra + Mrü) Majör :</div>
<div style="position:absolute;left:524px;top:574px;width:72px;height:20px;background:#fff;box-sizing:border-box;border:1px solid #7a7a7a"></div>
<div class="t" style="left:529.20px;top:577px;font-size:11px;letter-spacing:0.184px;">36.29</div>
<div class="t" style="left:601.80px;top:574px;font-size:11px;letter-spacing:0.323px;">[tfm]</div>
<div class="t" style="left:421.20px;top:603px;font-size:11px;letter-spacing:0.019px;">1.2(Mri + Mrj) Majör</div>
<div style="position:absolute;left:524px;top:598px;width:72px;height:20px;background:#fff;box-sizing:border-box;border:1px solid #7a7a7a"></div>
<div class="t" style="left:529.20px;top:601px;font-size:11px;letter-spacing:-0.017px;">14.168</div>
<div class="t" style="left:601.80px;top:598px;font-size:11px;letter-spacing:0.323px;">[tfm]</div>
<div class="t" style="left:421.20px;top:625px;font-size:11px;letter-spacing:-0.023px;">(Mra + Mrü) Minör :</div>
<div style="position:absolute;left:524px;top:622px;width:72px;height:20px;background:#fff;box-sizing:border-box;border:1px solid #7a7a7a"></div>
<div class="t" style="left:529.20px;top:625px;font-size:11px;letter-spacing:0.062px;">16.852</div>
<div class="t" style="left:601.80px;top:622px;font-size:11px;letter-spacing:0.323px;">[tfm]</div>
<div class="t" style="left:421.20px;top:648px;font-size:11px;letter-spacing:-0.023px;">1.2(Mri + Mrj) Minör</div>
<div style="position:absolute;left:524px;top:647px;width:72px;height:20px;background:#fff;box-sizing:border-box;border:1px solid #7a7a7a"></div>
<div class="t" style="left:529.20px;top:650px;font-size:11px;letter-spacing:0.459px;">6.847</div>
<div class="t" style="left:601.80px;top:646px;font-size:11px;letter-spacing:0.323px;">[tfm]</div>
<div class="t" style="left:421.20px;top:669px;font-size:11px;letter-spacing:-0.497px;">Güçlü Kolon</div>
<div style="position:absolute;left:661px;top:398px;width:540px;height:91px;box-sizing:border-box;border:1px solid #dcdcdc"></div>
<div style="position:absolute;left:668px;top:395px;width:127px;height:8px;background:#fff"></div>
<div class="t" style="left:669.20px;top:392px;font-size:11px;letter-spacing:-0.129px;">Malzeme karakteristikleri :</div>
<div class="t" style="left:681.20px;top:413px;font-size:11px;letter-spacing:-0.003px;">Beton fck :</div>
<div style="position:absolute;left:800px;top:409px;width:80px;height:20px;background:#fff;box-sizing:border-box;border:1px solid #7a7a7a"></div>
<div class="t" style="left:805.20px;top:413px;font-size:11px;letter-spacing:0.052px;">3059.149</div>
<div class="t" style="left:886.20px;top:413px;font-size:11px;letter-spacing:0.646px;">[tf/m²]</div>
<div class="t" style="left:681.20px;top:434px;font-size:11px;letter-spacing:0.034px;">Beton fcd :</div>
<div style="position:absolute;left:800px;top:434px;width:80px;height:20px;background:#fff;box-sizing:border-box;border:1px solid #7a7a7a"></div>
<div class="t" style="left:805.20px;top:437px;font-size:11px;letter-spacing:0.123px;">2039.432</div>
<div class="t" style="left:886.20px;top:434px;font-size:11px;letter-spacing:0.646px;">[tf/m²]</div>
<div class="t" style="left:681.20px;top:457px;font-size:11px;letter-spacing:0.116px;">Beton fctd :</div>
<div style="position:absolute;left:800px;top:460px;width:80px;height:20px;background:#fff;box-sizing:border-box;border:1px solid #7a7a7a"></div>
<div class="t" style="left:805.20px;top:463px;font-size:11px;letter-spacing:0.131px;">130.322</div>
<div class="t" style="left:886.20px;top:457px;font-size:11px;letter-spacing:0.646px;">[tf/m²]</div>
<div class="t" style="left:943.20px;top:413px;font-size:11px;letter-spacing:0.028px;">Donatı fyk :</div>
<div style="position:absolute;left:1055px;top:409px;width:80px;height:20px;background:#fff;box-sizing:border-box;border:1px solid #7a7a7a"></div>
<div class="t" style="left:1060.20px;top:413px;font-size:11px;letter-spacing:0.067px;">42828.081</div>
<div class="t" style="left:1142.20px;top:413px;font-size:11px;letter-spacing:0.646px;">[tf/m²]</div>
<div class="t" style="left:943.20px;top:434px;font-size:11px;letter-spacing:0.062px;">Donatı fyd :</div>
<div style="position:absolute;left:1055px;top:434px;width:80px;height:20px;background:#fff;box-sizing:border-box;border:1px solid #7a7a7a"></div>
<div class="t" style="left:1060.20px;top:437px;font-size:11px;letter-spacing:0.137px;">37241.81</div>
<div class="t" style="left:1142.20px;top:434px;font-size:11px;letter-spacing:0.646px;">[tf/m²]</div>
<div style="position:absolute;left:661px;top:496px;width:540px;height:203px;background:#fff;box-sizing:border-box;border:1px solid #828790"></div>
<div style="position:absolute;left:822px;top:498px;width:1px;height:24px;background:#e5e5e5"></div>
<div style="position:absolute;left:1009px;top:498px;width:1px;height:24px;background:#e5e5e5"></div>
<div style="position:absolute;left:820px;top:522px;width:1px;height:171px;background:#c8c8c8"></div>
<div style="position:absolute;left:1009px;top:522px;width:1px;height:171px;background:#c8c8c8"></div>
<div style="position:absolute;left:1198px;top:522px;width:1px;height:171px;background:#c8c8c8"></div>
<div style="position:absolute;left:663px;top:540px;width:536px;height:1px;background:#c8c8c8"></div>
<div style="position:absolute;left:663px;top:559px;width:536px;height:1px;background:#c8c8c8"></div>
<div style="position:absolute;left:663px;top:578px;width:536px;height:1px;background:#c8c8c8"></div>
<div style="position:absolute;left:663px;top:597px;width:536px;height:1px;background:#c8c8c8"></div>
<div style="position:absolute;left:663px;top:616px;width:536px;height:1px;background:#c8c8c8"></div>
<div style="position:absolute;left:663px;top:635px;width:536px;height:1px;background:#c8c8c8"></div>
<div style="position:absolute;left:663px;top:654px;width:536px;height:1px;background:#c8c8c8"></div>
<div style="position:absolute;left:663px;top:673px;width:536px;height:1px;background:#c8c8c8"></div>
<div style="position:absolute;left:663px;top:692px;width:536px;height:1px;background:#c8c8c8"></div>
<div class="a" style="left:668.20px;top:503px;font-size:11px;letter-spacing:-0.812px;">Kesme</div>
<div class="a" style="left:901.75px;top:503px;font-size:11px;">Majör</div>
<div class="a" style="left:1089.75px;top:503px;font-size:11px;">Minör</div>
<div class="a" style="left:668.20px;top:525px;font-size:11px;letter-spacing:-0.400px;">Mha (i+1)</div>
<div class="a" style="left:902.72px;top:525px;font-size:11px;">3.279</div>
<div class="a" style="left:1090.72px;top:525px;font-size:11px;">1.736</div>
<div class="a" style="left:668.20px;top:544px;font-size:11px;letter-spacing:-0.714px;">Mhü</div>
<div class="a" style="left:902.72px;top:544px;font-size:11px;">4.463</div>
<div class="a" style="left:1090.72px;top:544px;font-size:11px;">2.208</div>
<div class="a" style="left:668.20px;top:563px;font-size:11px;letter-spacing:-0.714px;">Mha</div>
<div class="a" style="left:902.72px;top:563px;font-size:11px;">0.896</div>
<div class="a" style="left:1090.72px;top:563px;font-size:11px;">2.369</div>
<div class="a" style="left:668.20px;top:582px;font-size:11px;letter-spacing:-0.376px;">Mhü (i-1)</div>
<div class="a" style="left:902.72px;top:582px;font-size:11px;">1.003</div>
<div class="a" style="left:1090.72px;top:582px;font-size:11px;">1.126</div>
<div class="a" style="left:668.20px;top:601px;font-size:11px;letter-spacing:-0.448px;">Mp üst</div>
<div class="a" style="left:899.66px;top:601px;font-size:11px;">16.529</div>
<div class="a" style="left:1090.72px;top:601px;font-size:11px;">7.988</div>
<div class="a" style="left:668.20px;top:620px;font-size:11px;letter-spacing:-0.406px;">Mp alt</div>
<div class="a" style="left:899.66px;top:620px;font-size:11px;">16.529</div>
<div class="a" style="left:1090.72px;top:620px;font-size:11px;">7.988</div>
<div class="a" style="left:668.20px;top:639px;font-size:11px;letter-spacing:-1.000px;">Mü</div>
<div class="a" style="left:902.72px;top:639px;font-size:11px;">9.529</div>
<div class="a" style="left:1090.72px;top:639px;font-size:11px;">4.472</div>
<div class="a" style="left:668.20px;top:658px;font-size:11px;letter-spacing:-1.000px;">Ma</div>
<div class="a" style="left:902.72px;top:658px;font-size:11px;">7.799</div>
<div class="a" style="left:1090.72px;top:658px;font-size:11px;">5.416</div>
<div class="a" style="left:668.20px;top:677px;font-size:11px;letter-spacing:-0.830px;">Ve</div>
<div class="a" style="left:902.72px;top:677px;font-size:11px;">7.534</div>
<div class="a" style="left:1090.72px;top:677px;font-size:11px;">4.299</div>
<div style="position:absolute;left:300px;top:721px;width:135px;height:21px;background:#e1e1e1;box-sizing:border-box;border:1px solid #adadad"></div>
<div class="t" style="left:312.60px;top:725px;font-size:11px;letter-spacing:-0.279px;">Donatı Hesap Makinesi</div>
<div style="position:absolute;left:448px;top:725px;width:13px;height:13px;background:#fff;box-sizing:border-box;border:1px solid #333"></div>
<div class="t" style="left:463.20px;top:725px;font-size:11px;letter-spacing:-0.231px;">Mantoları Göster</div>
<div style="position:absolute;left:556px;top:721px;width:73px;height:21px;background:#e1e1e1;box-sizing:border-box;border:1px solid #adadad"></div>
<div class="t" style="left:582.60px;top:725px;font-size:11px;letter-spacing:-0.384px;">Seç</div>
<div style="position:absolute;left:639px;top:725px;width:13px;height:13px;background:#fff;box-sizing:border-box;border:1px solid #333"></div>
<div class="t" style="left:654.20px;top:725px;font-size:11px;letter-spacing:-0.346px;">Tüm Katlar</div>
<div style="position:absolute;left:724px;top:721px;width:73px;height:21px;background:#e1e1e1;box-sizing:border-box;border:1px solid #adadad"></div>
<div class="t" style="left:759.70px;top:725px;font-size:11px;"></div>
<div style="position:absolute;left:808px;top:721px;width:73px;height:21px;background:#e1e1e1;box-sizing:border-box;border:1px solid #adadad"></div>
<div class="t" style="left:843.70px;top:725px;font-size:11px;"></div>
<div style="position:absolute;left:892px;top:721px;width:73px;height:21px;background:#e1e1e1;box-sizing:border-box;border:1px solid #adadad"></div>
<div class="t" style="left:915.35px;top:725px;font-size:11px;letter-spacing:0.052px;">Filtre</div>
<div style="position:absolute;left:976px;top:721px;width:73px;height:21px;background:#e1e1e1;box-sizing:border-box;border:1px solid #adadad"></div>
<div class="t" style="left:985.35px;top:725px;font-size:11px;letter-spacing:-0.143px;">Betonarme</div>
<svg style="position:absolute;left:0;top:0" width="1222" height="751"><g fill="none" stroke="#000" stroke-width="1.15"><path d="M759 729.2L753 732.5L759 735.8M767 729.2L761 732.5L767 735.8"/><path d="M837.5 729.2L843.5 732.5L837.5 735.8M845.5 729.2L851.5 732.5L845.5 735.8"/></g></svg>
<div style="position:absolute;left:1060px;top:721px;width:73px;height:21px;background:#e1e1e1;box-sizing:border-box;border:2px solid #0078d7"></div>
<div class="t" style="left:1078.30px;top:725px;font-size:11px;letter-spacing:-0.316px;">Tamam</div>
<div style="position:absolute;left:1141px;top:721px;width:73px;height:21px;background:#e1e1e1;box-sizing:border-box;border:1px solid #adadad"></div>
<div class="t" style="left:1165.25px;top:725px;font-size:11px;letter-spacing:0.522px;">İptal</div>
</body></html>
